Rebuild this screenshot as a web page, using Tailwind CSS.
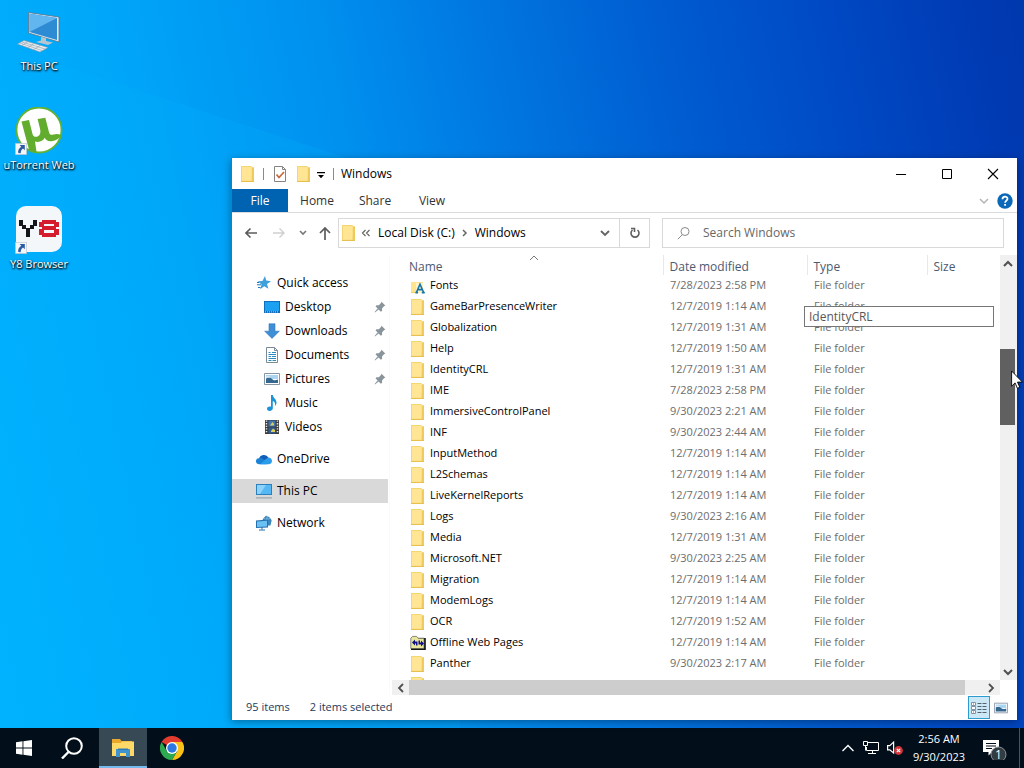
<!DOCTYPE html>
<html lang="en">
<head>
    <meta charset="UTF-8">
    <meta name="viewport" content="width=device-width, initial-scale=1.0">
    <title>Windows</title>
    <script src="https://cdn.jsdelivr.net/npm/@tailwindcss/browser@4"></script>
</head>
<body class="relative h-screen flex flex-col overflow-hidden font-['Open_Sans','Noto_Sans',sans-serif] text-xs text-black">

    <!-- Icon sprites -->
    <svg class="hidden">
        <symbol id="folder" viewBox="0 0 16 16">
            <path fill="#f0cb5c" d="M1.500 0h10v1.200H14V16H1V.5z"/>
            <path fill="#fbe08a" d="M1.500.5H12v14.500H1.500z"/>
            <path fill="#ffe594" d="M2 1h9v13.400H2z"/>
            <path fill="#edc95e" d="M12 9.500l1.400 1V15.500H11.500z"/>
            <path fill="#e5bd4c" d="M1 15.200h13v.8H1z"/>
        </symbol>
        <symbol id="fonts" viewBox="0 0 16 16">
            <path fill="#ffe48f" d="M1 4h12v11H1z"/>
            <path fill="#edc95e" d="M1 14.200h8v.8H1z"/>
            <path fill="#fff" opacity=".5" d="M6 5h8v10H6z"/>
            <path fill="none" stroke="#1475a8" stroke-width="1.600" d="M6.500 14.300L10 6.200l3.600 8.100M7.800 11.600h4.600M5.400 14.600h2.600M11.800 14.600h3"/>
        </symbol>
        <symbol id="offline" viewBox="0 0 16 16">
            <path fill="#111" d="M1 3h14.800v12H1z"/>
            <path fill="#e9e79c" stroke="#555" stroke-width=".7" d="M.8 13.600V3.200L2.600 1.400h4l1.600 1.800h5.800v10.400z"/>
            <path fill="#10108a" d="M2 7.500L5 4.500v2h2.500v4H6v-2H5v2zM14 8.500l-3 3v-2H8.500v-4H10v2h1v-2z"/>
        </symbol>
        <symbol id="star" viewBox="0 0 16 16">
            <path fill="#3d9fdc" d="M9 1l1.200 4.600L15 6.200l-4 2.900 1.400 4.700-4.200-2.500-4 3 1.300-4.900L1.800 6.200l4.700-.3z"/>
            <path stroke="#1e75b9" d="M1 9.800h4M2 12.500h2.500M1 7.500h2"/>
        </symbol>
        <symbol id="desktop" viewBox="0 0 16 16">
            <path fill="#0f6fbe" d="M0 2h16v12H0z"/>
            <path fill="#1ba0f2" d="M1 3h14v9H1z"/>
            <path stroke="#a9dcff" stroke-dasharray="1 1" d="M1 12.900h14"/>
        </symbol>
        <symbol id="downloads" viewBox="0 0 16 16">
            <path fill="#3f8fd6" stroke="#2e75b8" stroke-width=".6" d="M5 .8h6v7.400h4.300L8 15.400.7 8.200H5z"/>
        </symbol>
        <symbol id="documents" viewBox="0 0 16 16">
            <path fill="#fff" stroke="#7b8a95" d="M2.500.5h8l3 3v12h-11z"/>
            <path fill="none" stroke="#7b8a95" d="M10.500.5v3h3"/>
            <path stroke="#2d8ac2" d="M4.500 5.500h2M8 5.500h4M4.500 7.500h7.500M4.500 9.500h2.500M8 9.500h4M4.500 11.500h7.500M4.500 13.500h3M8.500 13.500h3.500"/>
        </symbol>
        <symbol id="pictures" viewBox="0 0 16 16">
            <path fill="#fff" stroke="#8796a3" d="M.5 2.500h15v11H.5z"/>
            <path fill="#a9d5f3" d="M2 4h12v4H2z"/>
            <path fill="#35678f" d="M2 8c2-2.500 4-2 6 0s4 1 6 .5V12H2z"/>
            <path fill="#dce9f2" d="M2 5.500c2-1 4 0 5 .5s-3 1-5 .8z"/>
        </symbol>
        <symbol id="music" viewBox="0 0 16 16">
            <path fill="#1c94d8" d="M7 0h1.800c.2 3 4 4 3.700 8-.2 1.500-.9 2.400-1.500 3 .6-3-.8-4.500-2.200-5v7.200c0 1.800-1.600 2.800-3.300 2.800S3 14.900 3 13.600s1.400-2.200 2.800-2.200c.5 0 .9.1 1.200.2z"/>
        </symbol>
        <symbol id="videos" viewBox="0 0 16 16">
            <path fill="#3b3b3b" d="M1 1h14v14H1z"/>
            <path stroke="#e6e6e6" stroke-width="1.500" stroke-dasharray="1.300 1.300" d="M2.500 1.500v13M13.500 1.500v13"/>
            <path fill="#3f74b5" d="M4.500 1.500h7v6h-7z"/>
            <path fill="#2f5a94" d="M4.500 8.500h7v6h-7z"/>
            <path fill="#d8ce5a" d="M7 5l1.500-2L10 5v1.500H6zM7 12l2-2.500 2 1.500v2H7z"/>
        </symbol>
        <symbol id="onedrive" viewBox="0 0 16 16">
            <path fill="#0f5fb8" d="M3 8a5 4.800 0 0 1 9.500-1.200L8 10z"/>
            <path fill="#1b83d6" d="M2.800 13.200A2.900 2.900 0 0 1 3 7.300c2-.6 3.500.3 5 1.500l3 4.400z"/>
            <path fill="#2a9cec" d="M4 13.200l8-6.600c2.500 0 4 1.700 4 3.500 0 1.900-1.500 3.100-3.200 3.100z"/>
        </symbol>
        <symbol id="pc" viewBox="0 0 16 16">
            <path fill="#2b7fbd" d="M0 1h16v11H0z"/>
            <path fill="#55b7f3" d="M1 2h14v9H1z"/>
            <path fill="#8dd2fb" d="M1 2h9L4 11H1z"/>
            <path fill="#8b9ba7" d="M0 14.400h16v1H0z"/>
        </symbol>
        <symbol id="network" viewBox="0 0 16 16">
            <path fill="#3d86bd" d="M10 .5l5.500 4.500-1 5.500H12L6.500 5z"/>
            <circle cx="11" cy="6" r="4.400" fill="#3d86bd"/>
            <path fill="none" stroke="#8dc3e6" stroke-width=".8" d="M11 1.500v4M8 3.500c2 1 4 1 6 0"/>
            <path fill="#2471ad" d="M0 5.500l12-1v8L0 13z"/>
            <path fill="#6bc1f4" d="M1 6.500l10-.8V11.600L1 12z"/>
            <path stroke="#2471ad" d="M6 12v2.500M3 15h6"/>
        </symbol>
        <symbol id="pin" viewBox="0 0 12 12">
            <path fill="#8a949c" d="M7.500.8l3.800 3.700-1.300.7-2 2.200.1 2.400-1.200 1L4.600 8.500 1 11.400.6 11l3-3.500L1.500 5.300l1-1 2.400-.1L7 2.100z"/>
        </symbol>
        <symbol id="shortcut" viewBox="0 0 12 12">
            <path fill="#f4f6f8" stroke="#a9b4bd" stroke-width=".6" d="M.3.3h11.400v11.400H.3z"/>
            <path fill="#2a5ca5" d="M4.600 2h5.200v5.200L8 5.500C6.300 6.800 5.800 8 5.700 10.200L3.300 10C2.700 7.500 4 5.200 6.300 3.800z"/>
        </symbol>
    </svg>

    <!-- Desktop -->
    <main class="relative flex-1 min-h-0 bg-[linear-gradient(78deg,#00b4ff_0%,#00a6f9_22%,#0090ee_40%,#0078e2_53%,#005cd0_69%,#004ac6_82%,#003ab2_96%,#0038ae_100%)]">
        <svg class="absolute inset-0 size-full" viewBox="0 0 1024 728" preserveAspectRatio="none" aria-hidden="true">
            <path fill="#00b0ff" opacity=".22" d="M0 45L460 195V728H0z"/>
        </svg>

        <div class="relative w-[78px] text-[11px] text-white text-center [text-shadow:0_1px_2px_#000,1px_1px_2px_#000]">
            <a href="#" class="flex flex-col items-center h-[99px] pt-2">
                <svg class="size-12" viewBox="0 0 48 48">
                    <path fill="#dfeaf2" stroke="#55748c" stroke-width=".8" d="M13.500 4.500L44 9v25L13.500 25z"/>
                    <path fill="#2d8bd4" d="M14.500 5.800L42 10v22L14.500 24z"/>
                    <path fill="#62b6f0" d="M14.500 5.800L42 10 14.500 24z"/>
                    <path fill="#b9c5ce" d="M26 29l5 1v3l7 1.500-5 2.500-12-3 5-1.500z"/>
                    <path fill="#e9edf0" stroke="#8b99a5" stroke-width=".6" d="M9 32.500l24 7-8 4.500L2.500 36z"/>
                    <path stroke="#9aa8b3" stroke-width=".7" d="M7 34l23 7M5 35l22 7.500M13 33.500l-6 4M19 35.500l-6 4M25 37.500l-6 4"/>
                </svg>
                <span class="leading-5 whitespace-nowrap">This PC</span>
            </a>
            <a href="#" class="flex flex-col items-center h-[99px] pt-2">
                <svg class="size-12" viewBox="0 0 48 48">
                    <circle cx="24" cy="23" r="22.500" fill="#fff" stroke="#62b233" stroke-width="1.800"/>
                    <path fill="#62ad2d" d="M6.500 14.500l7.500-1.500 3.500 14c1 4 6 3.500 7.500 0 .8-2 .2-5-.4-7l-2-8 7.700-1.300 3.700 14.500c.6 2.700 2.300 3 4.500 2.400 2.500-.8 4.600-.7 7.300.2-.8 3.600-4.600 5.800-8.800 6.400-3.800.6-6-.8-7.200-3.400-2 3.200-5.500 5-9.800 3.700l1.600 11c-2-.1-5.500-.9-7.400-2z"/>
                    <use href="#shortcut" y="36" width="12" height="12" x="0"/>
                </svg>
                <span class="leading-5 whitespace-nowrap">uTorrent Web</span>
            </a>
            <a href="#" class="flex flex-col items-center h-[99px] pt-2">
                <svg class="size-12" viewBox="0 0 48 48">
                    <rect x="1" y="0" width="46" height="46" rx="10" fill="#f4f7fa"/>
                    <path fill="#15151c" d="M4 14h4v6H4zM18 14h4v6h-4zM7 19h4v4H7zM15 19h4v4h-4zM11 22h4v9h-4z"/>
                    <path fill="#d41c2c" d="M27 14h14v4H27zM24 16h5v5h-5zM39 16h5v5h-5zM27 20h14v4H27zM24 23h5v6h-5zM39 23h5v6h-5zM27 27h14v4H27z"/>
                    <use href="#shortcut" y="36" width="12" height="12" x="0"/>
                </svg>
                <span class="leading-5 whitespace-nowrap">Y8 Browser</span>
            </a>
        </div>

        <!-- Explorer window -->
        <section class="absolute left-[231px] right-[7px] top-[158px] bottom-2 flex flex-col bg-white border-l border-[#1583b8] shadow-[0_2px_8px_rgba(0,0,0,0.35)]">
            <header class="flex items-center h-[31px] shrink-0 pl-2 pr-px">
                <svg class="size-4"><use href="#folder"/></svg>
                <span class="w-px h-3 bg-[#8a8a8a] ml-[7px]"></span>
                <button class="ml-2" aria-label="Properties">
                    <svg class="size-4" viewBox="0 0 16 16">
                        <path fill="#fff" stroke="#848484" d="M2.500.5h8l3 3v12h-11z"/>
                        <path fill="none" stroke="#848484" d="M10.500.5v3h3"/>
                        <path fill="none" stroke="#c8693a" stroke-width="1.700" d="M4.500 8.500l2.500 3L12 6"/>
                    </svg>
                </button>
                <button class="ml-2" aria-label="New folder"><svg class="size-4"><use href="#folder"/></svg></button>
                <button class="ml-1" aria-label="Customize Quick Access Toolbar">
                    <svg class="w-2.5 h-3" viewBox="0 0 10 12"><path d="M1 4h8v1.200H1zM2 7h6l-3 3.200z"/></svg>
                </button>
                <span class="w-px h-3 bg-[#8a8a8a] ml-[7px]"></span>
                <h1 class="ml-[7px] flex-1">Windows</h1>
                <button class="w-[46px] h-full flex items-center justify-center" aria-label="Minimize">
                    <svg class="size-3" viewBox="0 0 12 12"><path stroke="#000" d="M1 6.500h10"/></svg>
                </button>
                <button class="w-[46px] h-full flex items-center justify-center" aria-label="Maximize">
                    <svg class="size-3" viewBox="0 0 12 12"><path fill="none" stroke="#000" d="M1.500 1.500h9v9h-9z"/></svg>
                </button>
                <button class="w-[46px] h-full flex items-center justify-center" aria-label="Close">
                    <svg class="size-3" viewBox="0 0 12 12"><path stroke="#000" stroke-width="1.100" d="M1 1l10 10M11 1L1 11"/></svg>
                </button>
            </header>

            <nav class="flex items-center h-6 shrink-0 border-b border-[#dadbdc] text-[#333]">
                <button class="w-14 h-full bg-[#0063b1] text-white">File</button>
                <button class="w-[58px]">Home</button>
                <button class="w-[58px]">Share</button>
                <button class="w-14">View</button>
                <button class="ml-auto mr-2" aria-label="Expand the Ribbon">
                    <svg class="w-2.5 h-2" viewBox="0 0 10 8"><path fill="none" stroke="#b5b5b5" stroke-width="1.500" d="M1 2l4 4 4-4"/></svg>
                </button>
                <button class="mr-1" aria-label="Help">
                    <svg class="size-4" viewBox="0 0 16 16">
                        <circle cx="8" cy="8" r="7.700" fill="#0b68b8"/>
                        <path fill="none" stroke="#fff" stroke-width="1.800" d="M5.500 6.200c0-3.300 5-3.200 5-.4 0 1.700-2.400 1.900-2.400 4M8.100 11v1.800"/>
                    </svg>
                </button>
            </nav>

            <div class="flex items-center h-[42px] shrink-0 pl-[5px] pr-[13px] pb-0.5">
                <button class="w-7 flex justify-center" aria-label="Back">
                    <svg class="w-3 h-3" viewBox="0 0 12 12"><path fill="none" stroke="#5c5c5c" stroke-width="1.600" d="M12 6H1M5.500 1.500L1 6l4.500 4.500"/></svg>
                </button>
                <button class="w-7 flex justify-center" aria-label="Forward">
                    <svg class="w-3 h-3" viewBox="0 0 12 12"><path fill="none" stroke="#cfcfcf" stroke-width="1.400" d="M0 6h11M6.500 1.500L11 6l-4.500 4.500"/></svg>
                </button>
                <button class="w-5 flex justify-center" aria-label="Recent locations">
                    <svg class="w-2 h-2" viewBox="0 0 8 8"><path fill="none" stroke="#777" stroke-width="1.600" d="M1 2l3 3 3-3"/></svg>
                </button>
                <button class="w-6 flex justify-center" aria-label="Up">
                    <svg class="w-3 h-3.5" viewBox="0 0 12 14"><path fill="none" stroke="#5c5c5c" stroke-width="1.700" d="M6 14V2M1 7l5-5 5 5"/></svg>
                </button>
                <div class="flex items-center w-[312px] h-[30px] ml-px border border-[#d9d9d9]">
                    <svg class="size-4 ml-0.5"><use href="#folder"/></svg>
                    <svg class="w-2.5 h-2 ml-1" viewBox="0 0 10 8"><path fill="none" stroke="#666" stroke-width="1.200" d="M4.500 1l-3 3 3 3M8.500 1l-3 3 3 3"/></svg>
                    <button class="ml-[7px]">Local Disk (C:)</button>
                    <svg class="w-1.5 h-2 ml-[7px]" viewBox="0 0 6 8"><path fill="none" stroke="#666" stroke-width="1.500" d="M1 1l3 3-3 3"/></svg>
                    <button class="ml-[7px]">Windows</button>
                    <button class="ml-auto mr-[9px]" aria-label="Previous locations">
                        <svg class="w-2.5 h-2" viewBox="0 0 10 8"><path fill="none" stroke="#666" stroke-width="1.900" d="M1 2l4 4 4-4"/></svg>
                    </button>
                    <button class="w-[30px] h-full flex items-center justify-center border-l border-[#d9d9d9]" aria-label="Refresh">
                        <svg class="size-3" viewBox="0 0 12 12"><path fill="none" stroke="#5f5f5f" stroke-width="1.600" d="M8.500 3A4 4 0 1 1 3.500 3M2 1.500h3.500V5"/></svg>
                    </button>
                </div>
                <label class="flex items-center flex-1 h-[30px] ml-3 pl-3.5 border border-[#d9d9d9]">
                    <svg class="size-3.5" viewBox="0 0 14 14"><path fill="none" stroke="#8a8a8a" d="M5 9L.8 13.200"/><circle cx="8" cy="5.500" r="4" fill="none" stroke="#8a8a8a"/></svg>
                    <input type="text" placeholder="Search Windows" aria-label="Search Windows" class="flex-1 min-w-0 ml-3 outline-none placeholder:text-[#666]">
                </label>
            </div>

            <div class="flex flex-1 min-h-0">
                <ul id="places" class="w-[157px] shrink-0 pt-4"></ul>

                <div class="flex flex-col flex-1 min-w-0 border-l border-[#fafafa]">
                    <div class="flex flex-1 min-h-0">
                        <div class="relative flex-1 min-w-0 overflow-hidden">
                            <table class="w-full table-fixed text-left text-[11px] text-[#6d6d6d]">
                                <thead class="text-xs text-[#4c5a71]">
                                    <tr class="h-5">
                                        <th class="w-[273px] pl-[19px] pt-1 font-normal">Name</th>
                                        <th class="w-36 pl-1.5 pt-1 font-normal border-l border-[#e8e8e8]">Date modified</th>
                                        <th class="w-[120px] pl-1.5 pt-1 font-normal border-l border-[#e8e8e8]">Type</th>
                                        <th class="pl-1.5 pt-1 font-normal border-l border-[#e8e8e8]">Size</th>
                                    </tr>
                                </thead>
                                <tbody id="files"></tbody>
                            </table>
                            <svg class="absolute left-[139px] top-0 w-2.5 h-1.5" viewBox="0 0 10 6"><path fill="none" stroke="#777" d="M1 5l4-4 4 4"/></svg>
                            <div role="tooltip" class="absolute left-[414px] top-[51px] w-[190px] h-[21px] px-1 leading-5 bg-white border border-[#767676] text-[#575757]">IdentityCRL</div>
                        </div>
                        <div class="flex flex-col items-center w-[17px] bg-[#f0f0f0] pr-0.5">
                            <button class="w-full h-[17px] shrink-0 flex items-center justify-center" aria-label="Scroll up">
                                <svg class="w-2.5 h-2" viewBox="0 0 10 8"><path fill="none" stroke="#505050" stroke-width="2" d="M1 6l4-4 4 4"/></svg>
                            </button>
                            <div class="w-full flex-1"><div class="mt-[77px] h-[76px] bg-[#606060]"></div></div>
                            <button class="w-full h-[17px] shrink-0 flex items-center justify-center" aria-label="Scroll down">
                                <svg class="w-2.5 h-2" viewBox="0 0 10 8"><path fill="none" stroke="#505050" stroke-width="2" d="M1 2l4 4 4-4"/></svg>
                            </button>
                        </div>
                    </div>
                    <div class="flex h-[15px] shrink-0 ml-0.5 mr-[17px] bg-[#f0f0f0]">
                        <button class="w-[17px] flex items-center justify-center" aria-label="Scroll left">
                            <svg class="w-2 h-2.5" viewBox="0 0 8 10"><path fill="none" stroke="#505050" stroke-width="1.800" d="M6 1L2 5l4 4"/></svg>
                        </button>
                        <div class="flex-1 mr-[17px] bg-[#cdcdcd]"></div>
                        <button class="w-[18px] flex items-center justify-center" aria-label="Scroll right">
                            <svg class="w-2 h-2.5" viewBox="0 0 8 10"><path fill="none" stroke="#505050" stroke-width="1.800" d="M2 1l4 4-4 4"/></svg>
                        </button>
                    </div>
                </div>
            </div>

            <footer class="flex items-center h-[25px] shrink-0 pl-3.5 pr-2 text-[11px] text-[#1e395b]">
                <span>95 items</span>
                <span class="ml-5">2 items selected</span>
                <button class="ml-auto w-[22px] h-[23px] flex items-center justify-center bg-[#cce8f7] border border-[#2d9bd0]" aria-label="Details">
                    <svg class="w-4 h-3.5" viewBox="0 0 16 14">
                        <path fill="#fff" stroke="#8193a0" d="M.5 1.500h4v3h-4zM.5 5.500h4v3h-4zM.5 9.500h4v3h-4z"/>
                        <path stroke="#53626d" stroke-dasharray="4 1" d="M6.500 2.500h9.500M6.500 5.500h9.500M6.500 8.500h9.500M6.500 11.500h9.500"/>
                        <path stroke="#c34b3a" d="M2 3h1M2 11h1"/>
                    </svg>
                </button>
                <button class="ml-1 mr-px" aria-label="Large icons"><svg class="size-3.5"><use href="#pictures"/></svg></button>
            </footer>
        </section>
    </main>

    <!-- Taskbar -->
    <footer class="flex items-center h-10 shrink-0 bg-[#020f1b] text-white">
        <button class="w-12 h-full flex items-center justify-center" aria-label="Start">
            <svg class="size-4" viewBox="0 0 16 16"><path fill="#fff" d="M0 2.200L6.500 1.300V7.500H0zM7.400 1.200L16 0v7.500H7.400zM0 8.400h6.500v6.300L0 13.800zM7.400 8.400H16V16l-8.600-1.200z"/></svg>
        </button>
        <button class="w-12 h-full flex items-center justify-center" aria-label="Search">
            <svg class="size-[22px]" viewBox="0 0 22 22"><circle cx="13" cy="9" r="7.800" fill="none" stroke="#fff" stroke-width="2"/><path stroke="#fff" stroke-width="2.400" d="M7.500 15L1 21.500"/></svg>
        </button>
        <button class="w-12 h-full ml-[3px] flex items-center justify-center bg-[#374955] border-b-2 border-[#76b9ed]" aria-label="File Explorer">
            <svg class="w-[22px] h-[18px] mt-0.5" viewBox="0 0 22 18">
                <path fill="#e9a82c" d="M0 0h8l1.500 2H20v3H0z"/>
                <path fill="#ffd968" d="M0 4h9l1-1.500h12V17H0z"/>
                <path fill="#3f93cf" d="M4 10h14v8h-4v-4H8v4H4z"/>
                <path fill="#ffd968" d="M8 14h6v3H8z"/>
                <path fill="#2f7ab2" d="M6 9.500h10v1.500H6z"/>
            </svg>
        </button>
        <button class="w-12 h-full ml-px flex items-center justify-center" aria-label="Chrome">
            <svg class="size-6" viewBox="0 0 24 24">
                <path fill="#e33b2e" d="M12 12L1.600 6A12 12 0 0 1 22.400 6z"/>
                <path fill="#fbc116" d="M12 12V6h10.400A12 12 0 0 1 12 24l5.200-9z"/>
                <path fill="#2da94f" d="M12 12l5.200 3L12 24A12 12 0 0 1 1.600 6l5.200 9z"/>
                <circle cx="12" cy="12" r="6" fill="#fff"/>
                <circle cx="12" cy="12" r="4.700" fill="#2e78e4"/>
            </svg>
        </button>

        <button class="ml-auto" aria-label="Show hidden icons">
            <svg class="w-3.5 h-2.5" viewBox="0 0 14 10"><path fill="none" stroke="#fff" stroke-width="1.400" d="M1.500 8L7 2.500 12.500 8"/></svg>
        </button>
        <svg class="w-4 h-4 ml-2" viewBox="0 0 16 16"><path fill="none" stroke="#fff" d="M5 2.500h10.500v8H3.500V7M.5 1.500h4v4h-4zM9.500 10.500v3M5 13.500h8M2.500 5.500v5"/></svg>
        <svg class="w-4 h-4 ml-2" viewBox="0 0 16 16">
            <path fill="none" stroke="#fff" stroke-width="1.200" d="M.6 5.600h2.200l3.800-3.500v10.800L2.800 9.900H.6z"/>
            <circle cx="11.500" cy="10.500" r="4.400" fill="#d13438"/>
            <path stroke="#fff" stroke-width="1.200" d="M9.800 8.800l3.400 3.400M13.200 8.800l-3.400 3.400"/>
        </svg>
        <div class="w-[58px] ml-[7px] text-[11px] text-center leading-[18px] whitespace-nowrap">
            <div>2:56 AM</div>
            <div>9/30/2023</div>
        </div>
        <button class="relative w-6 h-6 ml-[15px]" aria-label="1 new notification">
            <svg class="w-full h-full" viewBox="0 0 24 24">
                <path fill="#fff" d="M0 4h16v12H9l-3.500 3.500V16H0z"/>
                <path stroke="#020f1b" stroke-width="1.200" d="M3 7.500h10M3 10h10M3 12.500h6"/>
                <circle cx="15.500" cy="18.500" r="7.500" fill="#333b43" stroke="#8b9298"/>
            </svg>
            <span class="absolute left-3 top-[11px] leading-4">1</span>
        </button>
        <div class="w-[5px] h-full ml-3 border-l border-[#4a545e]"></div>
    </footer>

    <!-- Mouse pointer -->
    <svg class="absolute left-[1011px] top-[370px] w-3 h-5" viewBox="0 0 12 20"><path fill="#fff" stroke="#000" stroke-width=".9" d="M.6 1v15.200l3.500-3.300 2.300 5.400 2.400-1-2.300-5.200h4.900z"/></svg>

    <script>
        const places = [
            { name: "Quick access", icon: "star" },
            { name: "Desktop", icon: "desktop", child: true, pinned: true },
            { name: "Downloads", icon: "downloads", child: true, pinned: true },
            { name: "Documents", icon: "documents", child: true, pinned: true },
            { name: "Pictures", icon: "pictures", child: true, pinned: true },
            { name: "Music", icon: "music", child: true },
            { name: "Videos", icon: "videos", child: true },
            { name: "OneDrive", icon: "onedrive" },
            { name: "This PC", icon: "pc", selected: true },
            { name: "Network", icon: "network" }
        ];

        const files = [
            ["Fonts", "7/28/2023 2:58 PM", "fonts"],
            ["GameBarPresenceWriter", "12/7/2019 1:14 AM"],
            ["Globalization", "12/7/2019 1:31 AM"],
            ["Help", "12/7/2019 1:50 AM"],
            ["IdentityCRL", "12/7/2019 1:31 AM"],
            ["IME", "7/28/2023 2:58 PM"],
            ["ImmersiveControlPanel", "9/30/2023 2:21 AM"],
            ["INF", "9/30/2023 2:44 AM"],
            ["InputMethod", "12/7/2019 1:14 AM"],
            ["L2Schemas", "12/7/2019 1:14 AM"],
            ["LiveKernelReports", "12/7/2019 1:14 AM"],
            ["Logs", "9/30/2023 2:16 AM"],
            ["Media", "12/7/2019 1:31 AM"],
            ["Microsoft.NET", "9/30/2023 2:25 AM"],
            ["Migration", "12/7/2019 1:14 AM"],
            ["ModemLogs", "12/7/2019 1:14 AM"],
            ["OCR", "12/7/2019 1:52 AM"],
            ["Offline Web Pages", "12/7/2019 1:14 AM", "offline"],
            ["Panther", "9/30/2023 2:17 AM"],
            ["", ""]
        ];

        document.getElementById("places").innerHTML = places.map(place => `
            <li class="${place.child ? "" : "mb-2 first:mb-0 nth-8:mt-2"}">
                <a href="#" class="flex items-center h-6 mr-px pr-0.5 ${place.child ? "pl-8" : "pl-6"} ${place.selected ? "bg-[#d9d9d9]" : ""}">
                    <svg class="size-4"><use href="#${place.icon}"/></svg>
                    <span class="flex-1 ml-[5px]">${place.name}</span>
                    ${place.pinned ? `<svg class="size-3"><use href="#pin"/></svg>` : ""}
                </a>
            </li>`).join("");

        document.getElementById("files").innerHTML = files.map(([name, date, icon]) => `
            <tr class="h-[21px]">
                <td class="pl-5">
                    <div class="flex items-center gap-1 text-black">
                        <svg class="size-4"><use href="#${icon || "folder"}"/></svg>${name}
                    </div>
                </td>
                <td class="pl-[7px]">${date}</td>
                <td class="pl-[7px]">${name && "File folder"}</td>
                <td></td>
            </tr>`).join("");
    </script>
</body>
</html>
